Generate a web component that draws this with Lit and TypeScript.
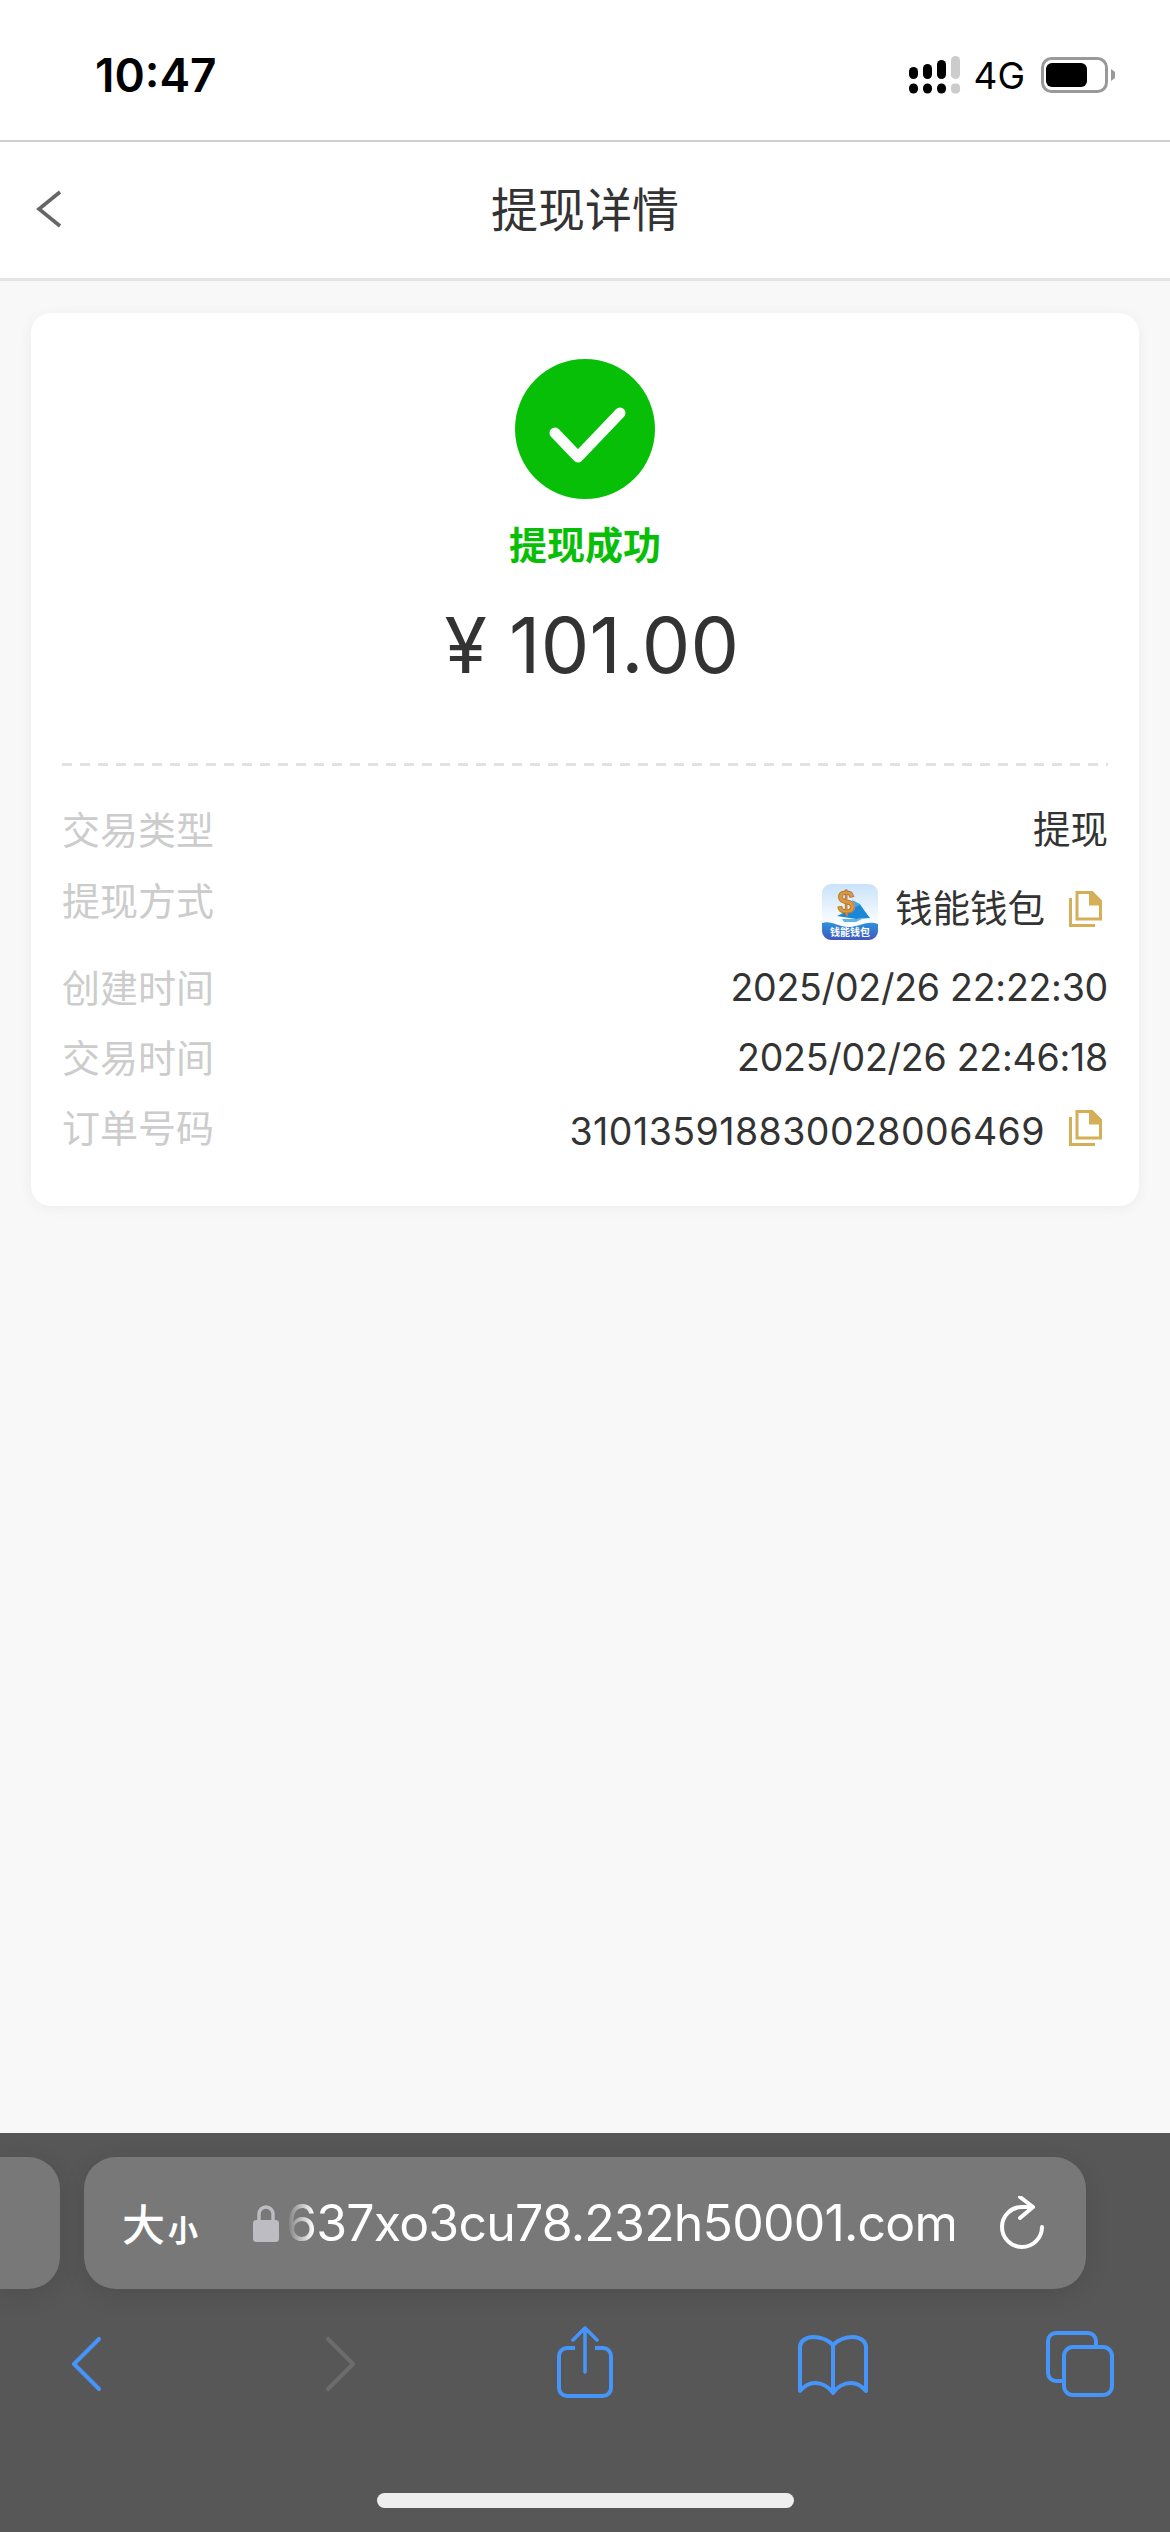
import {LitElement, html, css, svg} from 'lit';
import {customElement} from 'lit/decorators.js';

const copyIcon = svg`
  <svg class="copy" viewBox="0 0 33 36" width="33" height="36">
    <path d="M1.5 7v27.5H26" fill="none" stroke="#d5ae58" stroke-width="3"/>
    <path d="M8 1.5h15l8.5 8.5v18H8z" fill="#fff" stroke="#d5ae58" stroke-width="3"/>
    <path d="M20 1.5h3l9 9v4H20z" fill="#d5ae58"/>
  </svg>`;

const walletLogo = svg`
  <svg class="logo" viewBox="0 0 56 56" width="56" height="56">
    <defs>
      <linearGradient id="sky" x1="0" y1="0" x2="0" y2="1">
        <stop offset="0" stop-color="#c9e3fa"/>
        <stop offset="0.7" stop-color="#fbfdff"/>
      </linearGradient>
      <linearGradient id="sea" x1="0" y1="0" x2="0" y2="1">
        <stop offset="0" stop-color="#2a94dc"/>
        <stop offset="1" stop-color="#4257c0"/>
      </linearGradient>
    </defs>
    <rect width="56" height="56" rx="9" fill="url(#sky)"/>
    <path d="M30 16l8 4 7 11-12-4z" fill="#45a6dc"/>
    <path d="M15 32l23-11 10 13-14 1z" fill="#1b88d6"/>
    <path d="M20 35h20l-6 3H22z" fill="#5db5e6"/>
    <text x="24" y="29" text-anchor="middle" class="logo-coin">$</text>
    <path d="M0 39c10-3 18 5 28 4s18-7 28-3v7a9 9 0 0 1-9 9H9a9 9 0 0 1-9-9z" fill="url(#sea)"/>
    <text x="28" y="52" text-anchor="middle" class="logo-text">钱能钱包</text>
  </svg>`;

@customElement('app-root')
export class AppRoot extends LitElement {
  render() {
    return html`
      <header class="status">
        <span class="time">10:47</span>
        <div class="status-right">
          <svg viewBox="0 0 52 38" width="52" height="38">
            <g fill="#000">
              <rect x="0" y="27.5" width="9" height="10" rx="4.5"/>
              <rect x="14" y="27.5" width="9" height="10" rx="4.5"/>
              <rect x="28" y="27.5" width="9" height="10" rx="4.5"/>
              <rect x="0" y="11" width="9" height="12" rx="4.5"/>
              <rect x="14" y="8" width="9" height="15" rx="4.5"/>
              <rect x="28" y="4" width="9" height="19" rx="4.5"/>
            </g>
            <rect x="42" y="0" width="9" height="23" rx="4.5" fill="#ccc"/>
            <rect x="42" y="27.5" width="9" height="10" rx="4" fill="#ccc"/>
          </svg>
          <span class="net">4G</span>
          <svg viewBox="0 0 75 36" width="75" height="36">
            <rect x="1.5" y="1.5" width="64" height="33" rx="9" fill="#fff" stroke="#999" stroke-width="3"/>
            <rect x="5" y="6" width="41" height="24" rx="6" fill="#000"/>
            <path d="M70 12l4 3v6l-4 3z" fill="#999"/>
          </svg>
        </div>
      </header>

      <nav class="navbar">
        <svg class="nav-back" viewBox="0 0 26 38" width="26" height="38">
          <path d="M24 2L3 19l21 17" fill="none" stroke="#666" stroke-width="3.6"/>
        </svg>
        <span class="nav-title">提现详情</span>
      </nav>

      <main class="page">
        <section class="card">
          <div class="result">
            <svg viewBox="0 0 140 140" width="140" height="140">
              <circle cx="70" cy="70" r="70" fill="#08bf08"/>
              <path d="M40 74l23 24 42-44" fill="none" stroke="#fbfefb" stroke-width="11" stroke-linecap="round" stroke-linejoin="round"/>
            </svg>
            <span class="result-text">提现成功</span>
            <span class="amount">¥ 101.00</span>
          </div>
          <div class="divider"></div>
          <div class="rows">
            <div class="row first"><span class="label">交易类型</span><span class="value">提现</span></div>
            <div class="row tall">
              <span class="label">提现方式</span>
              <span class="value">${walletLogo}<span class="wallet">钱能钱包</span>${copyIcon}</span>
            </div>
            <div class="row"><span class="label">创建时间</span><span class="value date">2025/02/26 22:22:30</span></div>
            <div class="row"><span class="label">交易时间</span><span class="value date">2025/02/26 22:46:18</span></div>
            <div class="row"><span class="label">订单号码</span><span class="value order"><span class="order-no">310135918830028006469</span>${copyIcon}</span></div>
          </div>
        </section>
      </main>

      <footer class="safari">
        <div class="tabs">
          <div class="pill side"></div>
          <div class="pill url">
            <span class="aa">大<small>小</small></span>
            <span class="lock">
              <svg viewBox="0 0 28 38" width="28" height="38">
                <path d="M7 18V10a7 7 0 0 1 14 0v8" fill="none" stroke="#bcbcc2" stroke-width="3.4"/>
                <rect x="1" y="16" width="26" height="22" rx="3.5" fill="#bcbcc2"/>
              </svg>
            </span>
            <span class="host">637xo3cu78.232h50001.com</span>
            <svg class="reload" viewBox="0 0 46 54" width="46" height="54">
              <path d="M33 11H23A20 20 0 1 0 43 31" fill="none" stroke="#fff" stroke-width="4" stroke-linecap="round"/>
              <path d="M21 1l13 10-13 11" fill="none" stroke="#fff" stroke-width="4" stroke-linecap="round" stroke-linejoin="round"/>
            </svg>
          </div>
        </div>
        <div class="tools">
          <svg class="tool-nav" viewBox="0 0 30 54" width="30" height="54">
            <path d="M28 2L3 27l25 25" fill="none" stroke="#4595fa" stroke-width="4" stroke-linecap="round" stroke-linejoin="round"/>
          </svg>
          <svg class="tool-nav" viewBox="0 0 30 54" width="30" height="54">
            <path d="M2 2l25 25L2 52" fill="none" stroke="#6c6c6c" stroke-width="4" stroke-linecap="round" stroke-linejoin="round"/>
          </svg>
          <svg viewBox="0 0 56 72" width="56" height="72">
            <path d="M18 22H10a8 8 0 0 0-8 8v32a8 8 0 0 0 8 8h36a8 8 0 0 0 8-8V30a8 8 0 0 0-8-8h-8" fill="none" stroke="#4595fa" stroke-width="4"/>
            <path d="M28 3v43M16 14L28 2l12 12" fill="none" stroke="#4595fa" stroke-width="3.6" stroke-linecap="round" stroke-linejoin="round"/>
          </svg>
          <svg class="tool-book" viewBox="0 0 72 60" width="72" height="60">
            <path d="M36 10C30 4 22 2 16 2 8 2 3 7 3 12V56C8 50 14 48 18 48 25 48 32 52 36 58 40 52 47 48 54 48 58 48 64 50 69 56V12C69 7 64 2 56 2 50 2 42 4 36 10ZM36 10V56" fill="none" stroke="#4595fa" stroke-width="4" stroke-linejoin="round"/>
          </svg>
          <svg class="tool-tabs" viewBox="0 0 68 66" width="68" height="66">
            <path d="M17 50H10a8 8 0 0 1-8-8V10a8 8 0 0 1 8-8h32a8 8 0 0 1 8 8v5" fill="none" stroke="#4595fa" stroke-width="4"/>
            <rect x="18" y="16" width="48" height="48" rx="9" fill="none" stroke="#4595fa" stroke-width="4"/>
          </svg>
        </div>
        <div class="home-bar"></div>
      </footer>
    `;
  }

  static styles = css`
    :host {
      display: flex;
      flex-direction: column;
      height: 2532px;
      background: #f8f8f8;
      font-family: 'Inter', 'Noto Sans CJK SC', sans-serif;
      color: #333;
    }

    .status {
      height: 142px;
      flex: none;
      box-sizing: border-box;
      background: #fff;
      border-bottom: 2px solid #cfcfcf;
      display: flex;
      align-items: center;
      justify-content: space-between;
      padding: 10px 54px 0 95px;
    }
    .time {
      font-size: 46px;
      font-weight: 600;
      color: #000;
    }
    .status-right {
      display: flex;
      align-items: center;
    }
    .net {
      font-size: 37px;
      color: #000;
      margin: 0 16px 0 12px;
    }

    .navbar {
      height: 139px;
      flex: none;
      box-sizing: border-box;
      background: #fff;
      border-bottom: 3px solid #e4e4e4;
      display: flex;
      align-items: center;
      justify-content: center;
      padding-bottom: 8px;
      position: relative;
    }
    .nav-back {
      position: absolute;
      left: 36px;
      top: 48px;
    }
    .nav-title {
      font-size: 47px;
      color: #333;
    }

    .page {
      flex: 1;
      padding: 32px 31px;
    }
    .card {
      background: #fff;
      border-radius: 20px;
      box-shadow: 0 2px 14px rgba(0, 0, 0, 0.05);
      padding: 46px 31px 0;
      height: 893px;
      box-sizing: border-box;
    }
    .result {
      display: flex;
      flex-direction: column;
      align-items: center;
    }
    .result-text {
      font-size: 38px;
      font-weight: 700;
      color: #08bf08;
      line-height: 50px;
      margin-top: 21px;
    }
    .amount {
      font-size: 77px;
      letter-spacing: 0.3px;
      line-height: 92px;
      margin-top: 29px;
      padding-left: 14px;
      color: #333;
    }
    .divider {
      height: 3px;
      background: repeating-linear-gradient(to right, #e2e2e2 0 10px, transparent 10px 18px);
      margin-top: 72px;
    }
    .rows {
      margin-top: 41px;
    }
    .row {
      height: 70px;
      display: flex;
      justify-content: space-between;
      align-items: flex-start;
      font-size: 37.5px;
      line-height: 46px;
    }
    .row.first {
      height: 71px;
    }
    .row.tall {
      height: 87px;
    }
    .label {
      color: #ccc;
      font-size: 38px;
    }
    .value {
      color: #333;
      display: flex;
      align-items: center;
    }
    .date {
      letter-spacing: -0.25px;
    }
    .order {
      letter-spacing: 0.45px;
    }
    .order-no {
      padding-top: 4px;
    }
    .order .copy {
      margin-bottom: 4px;
    }
    .logo {
      margin-right: 17px;
      margin-top: 6px;
    }
    .logo-coin {
      font-family: 'Liberation Sans', sans-serif;
      font-size: 31px;
      font-weight: 700;
      fill: #d99a3c;
      stroke: #b5702a;
      stroke-width: 0.8px;
    }
    .logo-text {
      font-size: 10px;
      font-weight: 700;
      fill: #fff;
    }
    .copy {
      margin-left: 24px;
      margin-right: 6px;
    }

    .safari {
      height: 399px;
      flex: none;
      background: #575757;
      position: relative;
    }
    .tabs {
      display: flex;
      gap: 24px;
      padding-top: 24px;
    }
    .pill {
      height: 132px;
      background: #787878;
      box-shadow: 0 6px 24px rgba(0, 0, 0, 0.1);
    }
    .pill.side {
      width: 60px;
      border-radius: 0 32px 32px 0;
    }
    .pill.url {
      width: 1002px;
      border-radius: 32px;
      display: flex;
      align-items: center;
      color: #fff;
      box-sizing: border-box;
      padding-left: 38px;
    }
    .aa {
      font-size: 43px;
      font-weight: 500;
      width: 130px;
      flex: none;
      padding-bottom: 3px;
    }
    .aa small {
      font-size: 30px;
      font-weight: 700;
      margin-left: 3px;
    }
    .lock {
      display: flex;
      width: 34px;
      flex: none;
    }
    .host {
      font-size: 50px;
      letter-spacing: -0.8px;
      width: 668px;
      flex: none;
      white-space: nowrap;
      -webkit-mask-image: linear-gradient(to right, transparent 0, #000 28px);
      mask-image: linear-gradient(to right, transparent 0, #000 28px);
    }
    .reload {
      margin-left: 45px;
    }
    .tools {
      display: grid;
      grid-template-columns: 255px 231px 240px 249px auto;
      align-items: start;
      height: 72px;
      padding-left: 71px;
      margin-top: 37px;
    }
    .tool-nav {
      margin-top: 11px;
    }
    .tool-book {
      margin-top: 9px;
    }
    .tool-tabs {
      margin-top: 5px;
    }
    .home-bar {
      position: absolute;
      left: 377px;
      bottom: 24px;
      width: 417px;
      height: 15px;
      border-radius: 8px;
      background: #eee;
    }
  `;
}

declare global {
  interface HTMLElementTagNameMap {
    'app-root': AppRoot;
  }
}
